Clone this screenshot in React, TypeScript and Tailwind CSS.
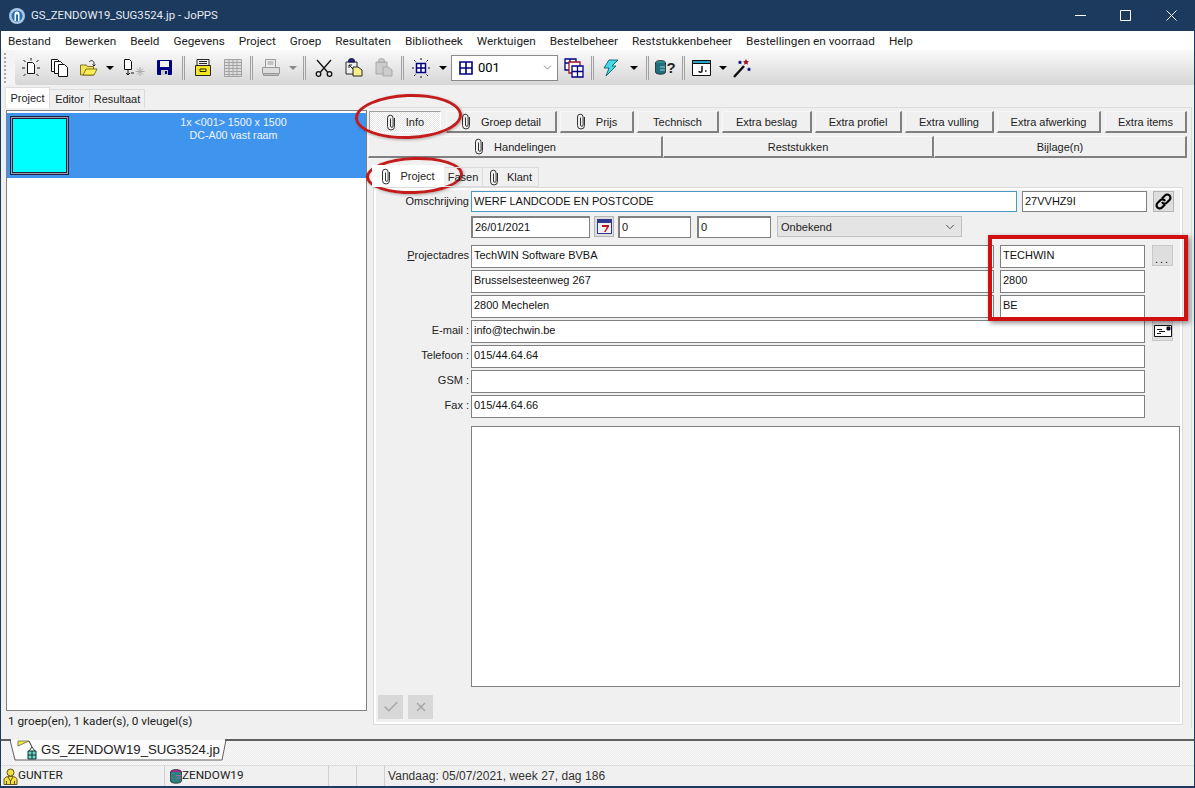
import type { ReactNode } from "react"
import { X, Check, ChevronDown } from "lucide-react"

const menuItems = [
  "Bestand", "Bewerken", "Beeld", "Gegevens", "Project", "Groep", "Resultaten", "Bibliotheek",
  "Werktuigen", "Bestelbeheer", "Reststukkenbeheer", "Bestellingen en voorraad", "Help",
]

function Clip() {
  return (
    <svg width="10" height="17" viewBox="0 0 10 17" fill="none" stroke="#333" strokeWidth="1">
      <path d="M8.500 4v8.500a3.500 3.500 0 0 1-7 0V4a2.800 2.800 0 0 1 5.600 0v8a1.300 1.300 0 0 1-2.600 0V4.500" />
    </svg>
  )
}

function Sep() {
  return <div className="mx-[3px] h-[24px] w-[3px] shrink-0 border-x border-x-[#a0a0a0] bg-[#e8e8e8]" />
}

function Caret({ gray = false, w = 14 }: { gray?: boolean; w?: number }) {
  return (
    <div className="flex shrink-0 justify-center" style={{ width: w }}>
      <div className={`h-0 w-0 border-x-[4px] border-t-[4px] border-x-transparent ${gray ? "border-t-[#888]" : "border-t-black"}`} />
    </div>
  )
}

function Tool({ w = 29, children }: { w?: number; children: ReactNode }) {
  return (
    <div className="flex h-[24px] shrink-0 items-center justify-center" style={{ width: w }}>
      {children}
    </div>
  )
}

function FrameButton({ pressed = false, clip = false, className, children }: { pressed?: boolean; clip?: boolean; className: string; children: ReactNode }) {
  return (
    <div
      className={`flex h-[22px] shrink-0 items-center justify-center gap-[10px] ${
        pressed
          ? "border border-t-[#a0a0a0] border-l-[#a0a0a0] border-r-white border-b-white bg-[repeating-conic-gradient(#e6e6e6_0_25%,#ffffff_0_50%)] bg-[length:2px_2px]"
          : "border-t border-l border-t-[#f8f8f8] border-l-[#f8f8f8] border-r-2 border-b-2 border-r-[#808080] border-b-[#808080] bg-[#f0f0f0]"
      } ${className}`}
    >
      {clip && <Clip />}
      <span className="pt-[1px]">{children}</span>
    </div>
  )
}

function Field({ className, focus = false, sunken = false, children }: { className: string; focus?: boolean; sunken?: boolean; children?: ReactNode }) {
  return (
    <div
      className={`shrink-0 overflow-hidden border bg-white pl-[2px] pt-[2px] leading-[15px] text-[#111] ${
        focus ? "border-[#4a9ac0]" : "border-[#808080]"
      } ${sunken ? "border-t-2 border-l-2" : ""} ${className}`}
    >
      {children}
    </div>
  )
}

function Row({ label, underline, children }: { label?: string; underline?: boolean; children: ReactNode }) {
  return (
    <div className="flex h-[25px] shrink-0 items-start">
      <div className="h-full w-[96px] shrink-0 pr-[2px] pt-[3px] text-right leading-[15px] text-[#222]">
        {underline ? <><span className="underline">P</span>{label?.slice(1)}</> : label}
      </div>
      {children}
    </div>
  )
}

export default function App() {
  return (
    <div className="relative flex h-[788px] w-[1195px] flex-col overflow-hidden bg-[#1c3a5e] px-[1px] pb-[2px] font-['Liberation_Sans',sans-serif] text-[11px] text-black">
      {/* title bar */}
      <div className="flex h-[31px] shrink-0 items-center text-white">
        <svg width="18" height="18" viewBox="0 0 18 18" className="ml-[7px]">
          <circle cx="9" cy="9" r="8" fill="#a9c8e6" />
          <circle cx="9" cy="9" r="5.500" fill="#2a6fb0" />
          <path d="M6.500 14V7a2.500 2.500 0 0 1 5 0v7h-1.500V7.500h-2V14z" fill="#fff" />
        </svg>
        <span className="ml-[5px] font-['Roboto',sans-serif] text-[11.400px] text-[#e4eaf1]">GS_ZENDOW19_SUG3524.jp - JoPPS</span>
        <div className="ml-auto mr-[17px] flex items-center">
          <svg width="11" height="11" viewBox="0 0 11 11" stroke="#fff" fill="none" className="mr-[34px]"><path d="M0 5.500h11" /></svg>
          <svg width="11" height="11" viewBox="0 0 11 11" stroke="#fff" fill="none" className="mr-[35px]"><path d="M.5.500h10v10H.5z" /></svg>
          <svg width="11" height="11" viewBox="0 0 11 11" stroke="#fff" fill="none"><path d="M.5.500l10 10M10.500.500l-10 10" /></svg>
        </div>
      </div>

      <div className="flex min-h-0 flex-1 flex-col bg-[#f0f0f0]">
        {/* menu */}
        <div className="flex h-[19px] shrink-0 items-center gap-[14px] bg-white pl-[7px] pt-[2px] font-['Roboto',sans-serif] text-[11.750px] text-[#222]">
          {menuItems.map((m) => (
            <span key={m}>{m}</span>
          ))}
        </div>

        {/* toolbar */}
        <div className="flex h-[35px] shrink-0 items-center bg-[#f4f4f4]">
          <div className="ml-[3px] h-[30px] w-[3px] shrink-0 border-l-2 border-dotted border-l-[#a8a8a8]" />
          <div className="ml-[8px] flex h-full flex-1 items-center rounded-l-[3px] bg-gradient-to-b from-[#fafafa] to-[#d6d6d6] pl-[1px]">
            <Tool>
              <svg width="20" height="20" viewBox="0 0 20 20" fill="none" stroke="#111">
                <path d="M6.500 4.500h5l2 2v9h-7z" fill="#fff" />
                <path d="M2.500 2l2 2M1 10h3M2.500 18l2-2M10 0v2.500M17.500 2l-2 2M19 10h-3M17.500 18l-2-2" />
              </svg>
            </Tool>
            <Tool>
              <svg width="18" height="18" viewBox="0 0 18 18" fill="#fff" stroke="#111">
                <path d="M.5.500h6l2 2v10h-8z" />
                <path d="M3.500 2.500h6l2 2v10h-8z" />
                <path d="M7.500 5.500h6l3 3v9h-9z" />
              </svg>
            </Tool>
            <Tool>
              <svg width="18" height="18" viewBox="0 0 18 18" stroke="#665500" strokeWidth=".8">
                <path d="M.5 6h6l1 1.500h6V16H.5z" fill="#f2e35a" />
                <path d="M3 16l3-6h11l-3 6z" fill="#ffee55" />
                <path d="M9 3c1.500-2 4.500-2 5 1v3M14 7l-1.500-1.500M14 7l1.500-1.500" fill="none" stroke="#111" />
              </svg>
            </Tool>
            <Caret />
            <Tool w={33}>
              <svg width="22" height="20" viewBox="0 0 22 20" fill="none" stroke="#111">
                <path d="M1.500 1.500h5l2 2v8h-7z" fill="#fff" />
                <path d="M5 12v5M3 15l2 2 2-2M8 15h3" />
                <path d="M17 9v9M12.500 13.500h9M14 10.500l6 6M20 10.500l-6 6" stroke="#aaa" />
              </svg>
            </Tool>
            <Tool>
              <svg width="15" height="15" viewBox="0 0 15 15">
                <path d="M1 0h13a1 1 0 0 1 1 1v13a1 1 0 0 1-1 1H1a1 1 0 0 1-1-1V1a1 1 0 0 1 1-1z" fill="#000080" />
                <path d="M3 1h9v6H3z" fill="#f0f0f0" />
                <path d="M4 10h7v5H4z" fill="#c8c8c8" />
                <path d="M8 11h2v3H8z" fill="#000080" />
              </svg>
            </Tool>
            <Sep />
            <Tool w={30}>
              <svg width="18" height="19" viewBox="0 0 18 19" stroke="#111" strokeWidth=".9">
                <path d="M3 1.500h12V8H3z" fill="#eee" />
                <path d="M5 3.500h8M5 5.500h8" />
                <path d="M1.500 7.500h15v10h-15z" fill="#f2e627" />
                <path d="M6 11h6v2.500H6z" fill="#f2e627" />
              </svg>
            </Tool>
            <Tool w={29}>
              <svg width="18" height="18" viewBox="0 0 18 18" fill="#dedede" stroke="#a4a4a4">
                <path d="M.5.500h17v17H.5zM.5 3.500h17M.5 6.500h17M.5 9.500h17M.5 12.500h17M.5 15.500h17M5 .5v17M9 .5v17M13 .5v17" />
              </svg>
            </Tool>
            <Sep />
            <Tool w={30}>
              <svg width="18" height="17" viewBox="0 0 18 17" fill="#ddd" stroke="#999">
                <path d="M3.500.500h10v8h-10z" fill="#eee" />
                <path d="M5.500 3h6M5.500 5h6" />
                <path d="M.5 8.500h17v6H.5z" />
                <path d="M1.500 14.500h15v2h-15z" fill="#bbb" />
              </svg>
            </Tool>
            <Caret gray />
            <Sep />
            <Tool w={30}>
              <svg width="18" height="18" viewBox="0 0 18 18" fill="none" stroke="#111" strokeWidth="1.300">
                <path d="M2 1l10.500 12M16 1L5.500 13" />
                <circle cx="3.500" cy="15" r="2.300" />
                <circle cx="14.500" cy="15" r="2.300" />
              </svg>
            </Tool>
            <Tool w={29}>
              <svg width="19" height="19" viewBox="0 0 19 19" stroke="#111" strokeWidth=".9">
                <path d="M2 4h11v12H2z" fill="#eee" />
                <path d="M4.500 3a3 2.500 0 0 1 6 0v1h-6z" fill="#2222aa" />
                <path d="M9 9h5l4 3v6H9z" fill="#f5ee8a" />
                <path d="M5 7l4 4M5 7h3M5 7v3" />
              </svg>
            </Tool>
            <Tool w={30}>
              <svg width="19" height="19" viewBox="0 0 19 19" stroke="#a4a4a4" strokeWidth=".9" fill="#ccc">
                <path d="M2 4h11v12H2z" />
                <path d="M4.500 3a3 2.500 0 0 1 6 0v1h-6z" />
                <path d="M9 9h5l4 3v6H9z" />
              </svg>
            </Tool>
            <Sep />
            <Tool w={27}>
              <svg width="20" height="20" viewBox="0 0 20 20" fill="none" stroke="#111">
                <path d="M5.500 5.500h9v9h-9z" fill="#fff" stroke="#000080" strokeWidth="1.500" />
                <path d="M10 5.500v9M5.500 10h9" stroke="#000080" strokeWidth="1.500" />
                <path d="M3 2l1.500 1.500M10 0v2M17 2l-1.500 1.500M1 10h2M17 10h2M3 18l1.500-1.500M10 18v2M17 18l-1.500-1.500" />
              </svg>
            </Tool>
            <Caret w={17} />
            <div className="mr-[2px] flex h-[26px] w-[107px] shrink-0 items-center border border-[#8a8a8a] bg-white pl-[7px]">
              <svg width="14" height="14" viewBox="0 0 14 14" fill="none" stroke="#000080" strokeWidth="1.600">
                <path d="M1 1h12v12H1zM7 1v12M1 7h12" />
              </svg>
              <span className="ml-[5px] font-['Roboto',sans-serif] text-[13px]">001</span>
              <ChevronDown size={13} strokeWidth={1.200} className="ml-auto mr-[3px] text-[#555]" />
            </div>
            <Tool w={28}>
              <svg width="20" height="20" viewBox="0 0 20 20" fill="#fff" strokeWidth="1.300">
                <path d="M1 1h11v11H1zM1 5h11M6 1v11" stroke="#000080" />
                <path d="M5 4h11v11H5z" stroke="#a01020" />
                <path d="M8 8h11v11H8zM13.500 8v11M8 13.500h11" stroke="#000080" />
              </svg>
            </Tool>
            <Sep />
            <Tool w={27}>
              <svg width="16" height="18" viewBox="0 0 16 18" stroke="#106060" strokeWidth=".9">
                <path d="M6 1h9L9 7h4L3 17l3-8H1z" fill="#44d8e8" />
              </svg>
            </Tool>
            <Caret w={19} />
            <Sep />
            <Tool w={27}>
              <div className="flex items-center">
                <svg width="11" height="15" viewBox="0 0 11 15" stroke="#111" strokeWidth=".7">
                  <ellipse cx="5.500" cy="3" rx="5" ry="2.500" fill="#2f8f8f" />
                  <path d="M.5 3v9c0 3 10 3 10 0V3" fill="#1f6f7f" />
                  <path d="M5 7h5M5 10h5" stroke="#cfe" />
                </svg>
                <span className="text-[15px] font-bold leading-none text-[#222]">?</span>
              </div>
            </Tool>
            <Sep />
            <Tool w={26}>
              <svg width="19" height="16" viewBox="0 0 19 16" stroke="#111">
                <path d="M.5.500h18v15H.5z" fill="#fff" />
                <path d="M.5.500h18v3H.5z" fill="#2aa5c5" />
                <path d="M10 6v5c0 1.500-3 1.500-3 0" fill="none" strokeWidth="1.500" />
                <path d="M13 11h1.500" strokeWidth="1.500" />
              </svg>
            </Tool>
            <Caret w={17} />
            <Tool w={24}>
              <svg width="20" height="20" viewBox="0 0 20 20">
                <path d="M1 19l10-11" stroke="#111" strokeWidth="2.500" />
                <path d="M13 1l1 2 2 .3-1.500 1.500.4 2-1.900-1-1.900 1 .4-2L10 3.300 12 3z" fill="#a01020" />
                <path d="M7 2l.7 1.500 1.500.2-1.100 1 .3 1.500L7 5.500 5.600 6.200l.3-1.500-1.100-1 1.500-.2zM16 9l.7 1.500 1.500.2-1.100 1 .3 1.500-1.400-.7-1.400.7.3-1.500-1.100-1 1.500-.2z" fill="#000080" />
              </svg>
            </Tool>
          </div>
        </div>

        {/* main */}
        <div className="flex min-h-0 flex-1 pt-[3px]">
          <div className="flex w-[367px] shrink-0 flex-col pb-[9px] pl-[1px]">
            <div className="relative z-10 flex h-[20px] shrink-0 items-end pl-[3px] text-[#222]">
              <div className="flex h-[21px] w-[45px] items-center justify-center border-x border-t border-[#dcdcdc] bg-white">Project</div>
              <div className="flex h-[19px] w-[40px] items-center justify-center border-r border-t border-[#dcdcdc]">Editor</div>
              <div className="flex h-[19px] w-[55px] items-center justify-center border-r border-t border-[#dcdcdc]">Resultaat</div>
            </div>
            <div className="ml-[4px] mr-[1px] mt-[2px] flex min-h-0 flex-1 flex-col border border-[#808080] bg-white pt-[2px]">
              <div className="flex h-[65px] shrink-0 bg-[#3f94ee] pl-[3px] pt-[3px]">
                <div className="flex h-[59px] w-[59px] shrink-0 items-center justify-center border border-[#202040] bg-[#9a9aa8]">
                  <div className="h-[55px] w-[55px] border border-[#202040] bg-[#00ffff]" />
                </div>
                <div className="flex-1 pl-[32px] text-center text-[10.700px] leading-[13px] text-[#f0f6ff]">
                  <div>1x &lt;001&gt; 1500 x 1500</div>
                  <div>DC-A00 vast raam</div>
                </div>
              </div>
            </div>
            <div className="flex h-[19px] shrink-0 items-center pl-[6px] pt-[2px] font-['Roboto',sans-serif] text-[11.750px] text-[#222]">1 groep(en), 1 kader(s), 0 vleugel(s)</div>
          </div>

          <div className="flex min-w-0 flex-1 flex-col">
            <div className="mr-[2px] mt-[19px] flex h-[621px] flex-col border-r border-t border-[#dddddd]">
              <div className="mt-[3px] flex gap-[3px] text-[#222]">
                <FrameButton pressed clip className="ml-[1px] mr-[2px] w-[72px]">Info</FrameButton>
                <FrameButton clip className="w-[111px]">Groep detail</FrameButton>
                <FrameButton clip className="w-[74px]">Prijs</FrameButton>
                <FrameButton className="w-[82px]">Technisch</FrameButton>
                <FrameButton className="w-[90px]">Extra beslag</FrameButton>
                <FrameButton className="w-[87px]">Extra profiel</FrameButton>
                <FrameButton className="w-[89px]">Extra vulling</FrameButton>
                <FrameButton className="mr-[1px] w-[104px]">Extra afwerking</FrameButton>
                <FrameButton className="w-[82px]">Extra items</FrameButton>
              </div>
              <div className="mt-[3px] flex text-[#222]">
                <FrameButton clip className="w-[295px]">Handelingen</FrameButton>
                <FrameButton className="w-[271px]">Reststukken</FrameButton>
                <FrameButton className="w-[253px]">Bijlage(n)</FrameButton>
              </div>

              <div className="relative z-10 mt-[8px] flex h-[21px] shrink-0 items-end pl-[4px] text-[#222]">
                <div className="flex h-[22px] w-[72px] items-center justify-center gap-[9px] bg-white">
                  <Clip />
                  <span>Project</span>
                </div>
                <div className="flex h-[20px] w-[39px] items-center justify-center border-y border-r border-[#dcdcdc]">Fasen</div>
                <div className="flex h-[20px] w-[56px] items-center justify-center gap-[8px] border-y border-r border-[#dcdcdc]">
                  <Clip />
                  <span>Klant</span>
                </div>
              </div>

              <div className="mb-[3px] ml-[5px] mr-[8px] flex min-h-0 flex-1 flex-col border border-[#dcdcdc] pl-[1px] pt-[3px] shadow-[inset_0_0_0_2px_#ffffff]">
                <Row label="Omschrijving">
                  <Field focus className="h-[21px] w-[546px]">WERF LANDCODE EN POSTCODE</Field>
                  <Field className="ml-[5px] h-[21px] w-[125px]">27VVHZ9I</Field>
                  <div className="ml-[6px] flex h-[21px] w-[21px] items-center justify-center border border-[#b4b4b4] bg-[#dedede]">
                    <svg width="19" height="19" viewBox="0 0 19 19" fill="none" stroke="#000" strokeWidth="2.200">
                      <path d="M8 6.500l3-3a3 3 0 0 1 4.500 4.500l-3 3a3 3 0 0 1-4.500-1" />
                      <path d="M11 12.500l-3 3A3 3 0 0 1 3.500 11l3-3a3 3 0 0 1 4.500 1" />
                    </svg>
                  </div>
                </Row>
                <Row>
                  <Field sunken className="h-[22px] w-[119px]">26/01/2021</Field>
                  <div className="ml-[4px] flex h-[21px] w-[20px] items-center justify-center border border-[#b4b4b4] bg-[#dedede]">
                    <svg width="15" height="15" viewBox="0 0 15 15">
                      <path d="M0 0h15v15H0z" fill="#303890" />
                      <path d="M1 4h13v10H1z" fill="#f0f0f0" />
                      <path d="M5 6h7v1.500L8.500 13H7l3-5H5z" fill="#c01020" />
                    </svg>
                  </div>
                  <Field sunken className="ml-[4px] h-[22px] w-[73px]">0</Field>
                  <Field sunken className="ml-[6px] h-[22px] w-[74px]">0</Field>
                  <div className="ml-[6px] flex h-[21px] w-[185px] items-center border border-[#c0c0c0] bg-[#e4e4e4] pl-[3px] pt-[1px] text-[#222]">
                    Onbekend
                    <ChevronDown size={14} strokeWidth={1.400} className="ml-auto mr-[4px] text-[#333]" />
                  </div>
                </Row>
                <div className="h-[4px] shrink-0" />
                <Row label="Projectadres" underline>
                  <Field className="h-[23px] w-[523px]">TechWIN Software BVBA</Field>
                  <Field className="ml-[6px] h-[23px] w-[145px]">TECHWIN</Field>
                  <div className="ml-[7px] flex h-[21px] w-[21px] items-end justify-center border border-[#c8c8c8] bg-[#dedede] pb-[1px] leading-[10px] tracking-[2px]">...</div>
                </Row>
                <Row>
                  <Field className="h-[23px] w-[523px]">Brusselsesteenweg 267</Field>
                  <Field className="ml-[6px] h-[23px] w-[145px]">2800</Field>
                </Row>
                <Row>
                  <Field className="h-[23px] w-[523px]">2800 Mechelen</Field>
                  <Field className="ml-[6px] h-[23px] w-[145px]">BE</Field>
                </Row>
                <Row label="E-mail :">
                  <Field className="h-[23px] w-[674px]">info@techwin.be</Field>
                  <div className="ml-[7px] flex h-[21px] w-[21px] items-center justify-center border border-[#c8c8c8] bg-[#dedede]">
                    <svg width="18" height="12" viewBox="0 0 18 12" stroke="#111" fill="#fff">
                      <path d="M.5.500h17v11H.5z" />
                      <path d="M3 4.500h5M5 6.500h6M3 8.500h4" />
                      <path d="M13 2h3v3h-3z" fill="#000060" />
                    </svg>
                  </div>
                </Row>
                <Row label="Telefoon :">
                  <Field className="h-[23px] w-[674px]">015/44.64.64</Field>
                </Row>
                <Row label="GSM :">
                  <Field className="h-[23px] w-[674px]" />
                </Row>
                <Row label="Fax :">
                  <Field className="h-[23px] w-[674px]">015/44.64.66</Field>
                </Row>
                <div className="ml-[96px] mt-[6px] h-[261px] w-[709px] shrink-0 border border-[#808080] bg-white" />
                <div className="ml-[3px] mt-[8px] flex gap-[5px]">
                  <div className="flex h-[24px] w-[25px] items-center justify-center bg-[#d8d8d8]">
                    <Check size={18} strokeWidth={2} className="text-[#a8a8a8]" />
                  </div>
                  <div className="flex h-[24px] w-[25px] items-center justify-center bg-[#d8d8d8]">
                    <X size={14} strokeWidth={2.500} className="text-[#a8a8a8]" />
                  </div>
                </div>
              </div>
            </div>
          </div>
        </div>

        {/* doc tabs */}
        <div className="relative flex h-[26px] shrink-0 items-start bg-[repeating-conic-gradient(#ececec_0_25%,#f8f8f8_0_50%)] bg-[length:2px_2px]">
          <svg width="1193" height="26" viewBox="0 0 1193 26" className="absolute left-0 top-0">
            <path d="M9 1l5 20h207l4-20z" fill="#fbfbfb" />
            <path d="M0 1h10M224 1h969" stroke="#606060" strokeWidth="2" fill="none" />
            <path d="M9 1l5 20h207l4-20" stroke="#606060" fill="none" />
          </svg>
          <div className="relative ml-[16px] mt-[1px] flex h-[20px] items-center text-[13.200px] text-[#222]">
            <svg width="24" height="20" viewBox="0 0 24 20" className="shrink-0">
              <path d="M1 1h11L1 6z" fill="#f2e840" stroke="#555" strokeWidth=".7" />
              <path d="M12 1l3 6M12 11l3-4 3 4" stroke="#333" fill="none" />
              <path d="M11 11h8v8h-8z" fill="#70d8c8" stroke="#103030" />
              <path d="M15 11v8M11 15h8" stroke="#103030" />
            </svg>
            GS_ZENDOW19_SUG3524.jp
          </div>
        </div>

        {/* status bar */}
        <div className="flex h-[21px] shrink-0 items-center border-t border-[#dcdcdc] text-[12px] text-[#222]">
          <div className="flex h-full w-[164px] items-center border-r border-[#d0d0d0] pl-[2px]">
            <svg width="15" height="17" viewBox="0 0 15 17" stroke="#443300" strokeWidth=".8" fill="#f2e040">
              <circle cx="7.500" cy="4.500" r="3.500" />
              <path d="M1 16.500v-4.500c0-3 3-3.500 6.500-3.500S14 9 14 12v4.500z" />
              <path d="M5 9l2.500 4L10 9M7.500 13v3.500M3.500 13v3.500M11.500 13v3.500" fill="none" />
            </svg>
            <span className="font-['Roboto',sans-serif] text-[11.750px]">GUNTER</span>
          </div>
          <div className="flex h-full w-[164px] items-center border-r border-[#d0d0d0] pl-[5px]">
            <svg width="12" height="15" viewBox="0 0 12 15" stroke="#222" strokeWidth=".7">
              <ellipse cx="6" cy="3" rx="5.500" ry="2.500" fill="#a03090" />
              <path d="M.5 3v9c0 3 11 3 11 0V3" fill="#2f7f7f" />
              <path d="M6 6.500h5.500M6 9h5.500" stroke="#c060b0" />
            </svg>
            <span className="font-['Roboto',sans-serif] text-[11.750px]">ZENDOW19</span>
          </div>
          <div className="h-full w-[28px] border-r border-[#d0d0d0]" />
          <div className="h-full w-[28px] border-r border-[#d0d0d0]" />
          <span className="ml-[3px] tracking-[0.05px] text-[#333]">Vandaag: 05/07/2021, week 27, dag 186</span>
        </div>
      </div>

      {/* red annotations drawn over the screenshot */}
      <div className="pointer-events-none absolute left-[355px] top-[94px] h-[45px] w-[107px] -rotate-2 rounded-[50%] border-[3.500px] border-[#c41c1c] shadow-[1px_1px_3px_rgba(0,0,0,0.3)]" />
      <div className="pointer-events-none absolute left-[366px] top-[157px] h-[37px] w-[97px] -rotate-2 rounded-[50%] border-[3.500px] border-[#c41c1c] shadow-[1px_1px_3px_rgba(0,0,0,0.3)]" />
      <div className="pointer-events-none absolute left-[988px] top-[235px] h-[86px] w-[200px] border-[4px] border-[#d01010] shadow-[2px_2px_5px_rgba(0,0,0,0.45)]" />
    </div>
  )
}
